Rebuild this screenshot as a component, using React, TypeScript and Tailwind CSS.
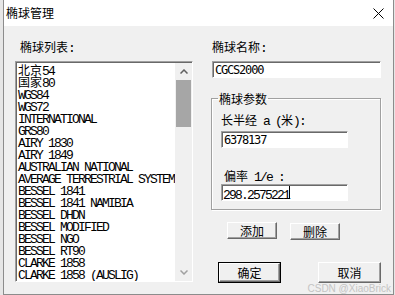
import React from 'react'

const CJK = /([\u2E80-\u9FFF\uFF00-\uFFEF]+)/

// mixed text: CJK glyphs full width, latin glyphs half width (6px), like SimSun
function T({ s }: { s: string }) {
  return (
    <>
      {s
        .split(CJK)
        .filter(Boolean)
        .map((p, i) =>
          CJK.test(p) ? (
            <span key={i} className="font-['Noto_Sans_CJK_SC',sans-serif] text-[12px] tracking-normal">
              {p}
            </span>
          ) : (
            <span key={i} className="font-['Liberation_Mono',monospace] text-[13px] tracking-[-1.8px]">
              {p}
            </span>
          )
        )}
    </>
  )
}

const items = [
  '北京54',
  '国家80',
  'WGS84',
  'WGS72',
  'INTERNATIONAL',
  'GRS80',
  'AIRY 1830',
  'AIRY 1849',
  'AUSTRALIAN NATIONAL',
  'AVERAGE TERRESTRIAL SYSTEM',
  'BESSEL 1841',
  'BESSEL 1841 NAMIBIA',
  'BESSEL DHDN',
  'BESSEL MODIFIED',
  'BESSEL NGO',
  'BESSEL RT90',
  'CLARKE 1858',
  'CLARKE 1858 (AUSLIG)',
]

const sunken =
  'bg-white border border-t-[#a0a0a0] border-l-[#a0a0a0] border-b-white border-r-white shadow-[inset_1px_1px_0_#696969]'

function Button({ label, isDefault, className }: { label: string; isDefault?: boolean; className: string }) {
  const face = (
    <div className="flex-1 flex items-center justify-center border border-t-white border-l-white border-r-[#696969] border-b-[#696969] shadow-[inset_-1px_-1px_0_#a0a0a0] bg-[#f0f0f0]">
      <span className="font-['Noto_Sans_CJK_SC',sans-serif] text-[12px] leading-none text-black">{label}</span>
    </div>
  )
  return (
    <div className={`flex ${isDefault ? 'border border-black' : ''} ${className}`}>{face}</div>
  )
}

export default function App() {
  return (
    <div className="relative w-[395px] h-[295px] overflow-hidden bg-[#e6e6e6]">
      <div className="ml-[3px] w-[391px] h-[295px] flex flex-col border-x border-b border-[#8c8c8c] bg-[#f0f0f0]">
        {/* Title bar */}
        <div className="h-[26px] shrink-0 bg-white flex items-center justify-between pl-[2px] pr-[9px]">
          <span className="font-['Noto_Sans_CJK_SC',sans-serif] text-[12px] leading-none text-black">椭球管理</span>
          <svg width="11" height="11" viewBox="0 0 11 11">
            <path d="M0.5 0.5L10.5 10.5M10.5 0.5L0.5 10.5" stroke="#000" strokeWidth="1" />
          </svg>
        </div>

        <div className="flex flex-1 pl-[11px]">
          {/* Left column */}
          <div className="w-[178px] flex flex-col">
            <div className="mt-[12px] h-[16px] leading-[16px] pl-[5px] text-black whitespace-pre">
              <T s="椭球列表:" />
            </div>
            <div className={`mt-[7px] h-[221px] flex overflow-hidden ${sunken}`}>
              <div className="flex-1 pt-[1px] pl-[2px]">
                {items.map((it) => (
                  <div key={it} className="h-[12px] leading-[12px] whitespace-pre text-black">
                    <T s={it} />
                  </div>
                ))}
              </div>
              <div className="w-[17px] mt-[1px] flex flex-col bg-[#f0f0f0]">
                <div className="h-[17px] flex items-center justify-center">
                  <svg width="8" height="5" viewBox="0 0 8 5">
                    <path d="M0.5 4.5L4 1L7.5 4.5" stroke="#606060" strokeWidth="1.5" fill="none" />
                  </svg>
                </div>
                <div className="flex-1 px-[1px]">
                  <div className="h-[47px] bg-[#a6a6a6]" />
                </div>
                <div className="h-[17px] flex items-center justify-center">
                  <svg width="8" height="5" viewBox="0 0 8 5">
                    <path d="M0.5 0.5L4 4L7.5 0.5" stroke="#a0a0a0" strokeWidth="1.5" fill="none" />
                  </svg>
                </div>
              </div>
            </div>
          </div>

          {/* Right column */}
          <div className="ml-[18px] w-[170px] flex flex-col">
            <div className="mt-[12px] h-[16px] leading-[16px] pl-[1px] text-black whitespace-pre">
              <T s="椭球名称:" />
            </div>
            <div className={`mt-[7px] ml-[1px] w-[169px] h-[17px] flex items-center pl-[2px] ${sunken}`}>
              <span className="font-['DejaVu_Sans_Mono',monospace] text-[12px] tracking-[-1.2px] leading-none text-black">
                CGCS2000
              </span>
            </div>

            <fieldset className="mt-[13px] w-[170px] border border-[#a0a0a0] shadow-[inset_1px_1px_0_#ffffff,1px_1px_0_#ffffff] pb-[8px]">
              <legend className="ml-[6px] px-[1px] h-[14px] leading-[14px] text-black">
                <T s="椭球参数" />
              </legend>
              <div className="mt-[6px] ml-[9px] h-[16px] leading-[16px] whitespace-pre text-black">
                <T s="长半经 a (米):" />
              </div>
              <div className={`mt-[4px] ml-[9px] w-[127px] h-[17px] flex items-center pl-[2px] ${sunken}`}>
                <span className="font-['DejaVu_Sans_Mono',monospace] text-[12px] tracking-[-1.2px] leading-none text-black">
                  6378137
                </span>
              </div>
              <div className="mt-[19px] ml-[12px] h-[16px] leading-[16px] whitespace-pre text-black">
                <T s="偏率 1/e :" />
              </div>
              <div className={`mt-[1px] ml-[9px] w-[127px] h-[17px] flex items-center pl-[1px] ${sunken}`}>
                <span className="h-[12px] leading-[12px] whitespace-pre text-black">
                  <T s="298.2575221" />
                </span>
                <span className="w-[1px] h-[13px] bg-black" />
              </div>
            </fieldset>

            <div className="mt-[12px] flex items-start">
              <Button label="添加" className="ml-[16px] w-[50px] h-[17px]" />
              <Button label="删除" className="ml-[13px] mt-[1px] w-[50px] h-[17px]" />
            </div>

            <div className="mt-[22px] flex">
              <Button label="确定" isDefault className="ml-[7px] w-[63px] h-[21px]" />
              <Button label="取消" className="ml-[37px] w-[63px] h-[21px]" />
            </div>
          </div>
        </div>
      </div>
      <div className="absolute right-[4px] bottom-[1px] font-['Liberation_Sans',sans-serif] text-[10px] leading-[10px] text-[#c4c4c4]">
        CSDN @XiaoBrick
      </div>
    </div>
  )
}
